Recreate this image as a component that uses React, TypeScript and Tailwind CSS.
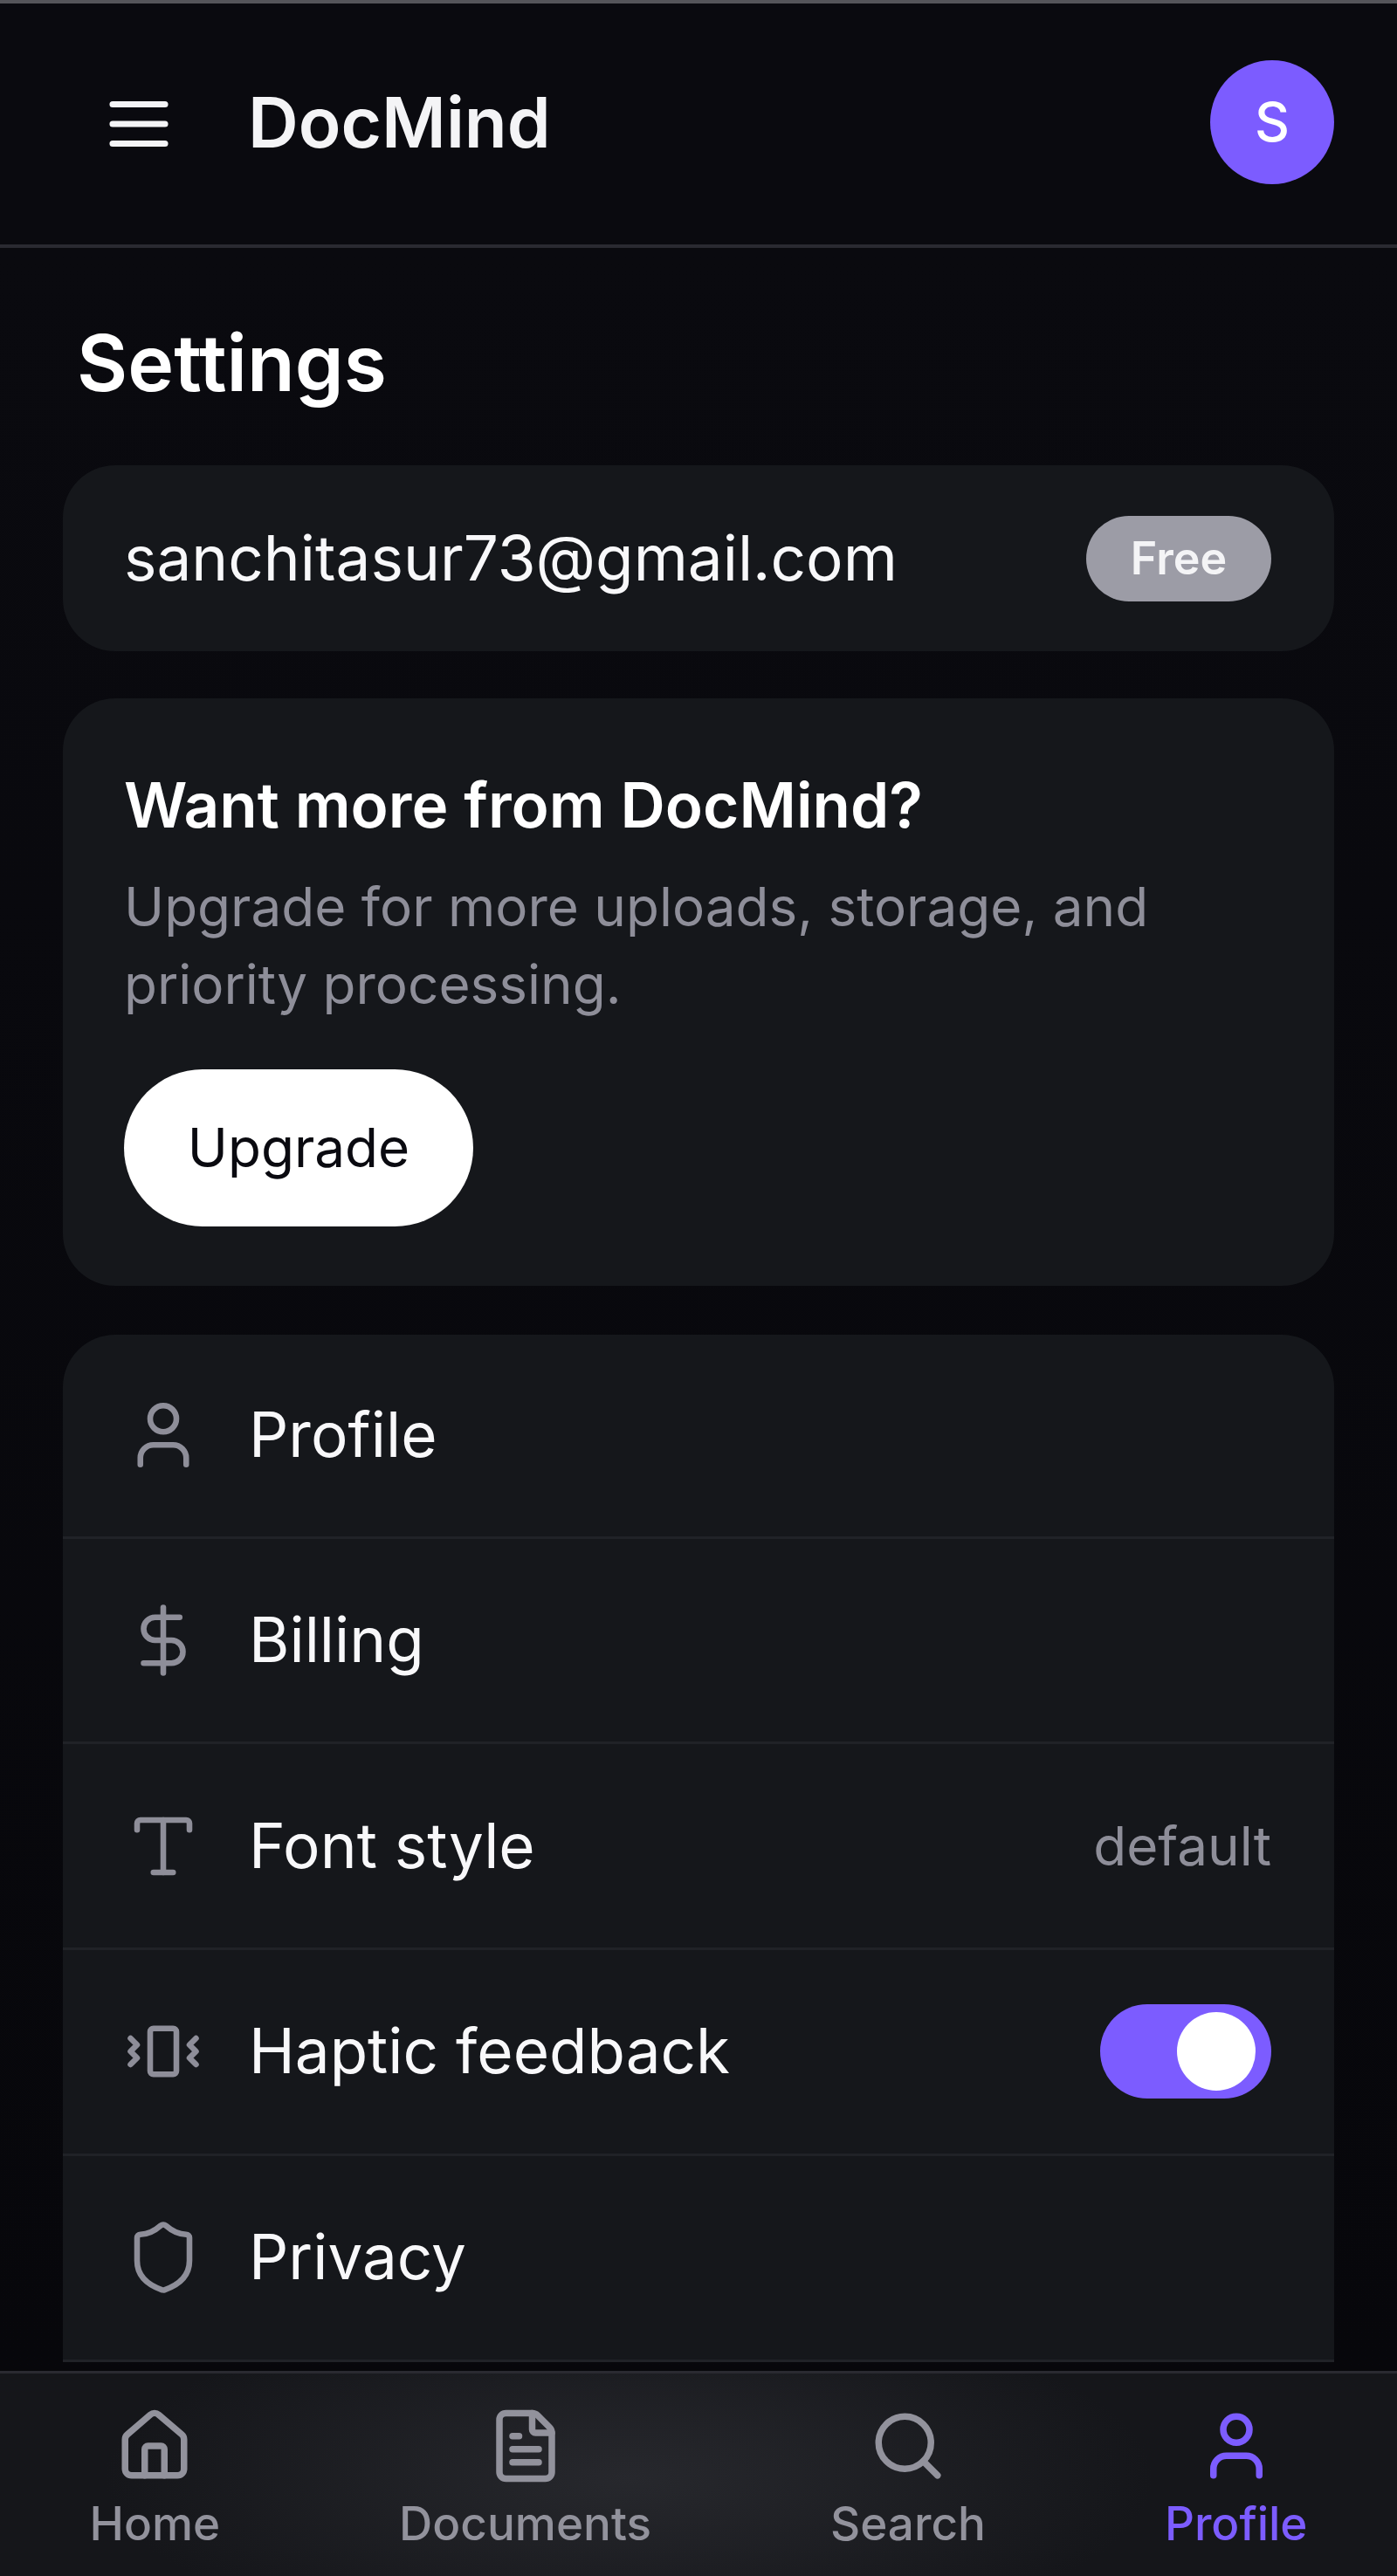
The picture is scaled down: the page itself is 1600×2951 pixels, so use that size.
import { DollarSign, FileText, House, Search, Shield, Type, User, Vibrate } from 'lucide-react';
import type { ReactNode } from 'react';

function Row({ icon, label, right }: { icon: ReactNode; label: string; right?: ReactNode }) {
  return (
    <div className="flex h-[235.75px] shrink-0 items-center border-b-[3px] border-[#202227] pl-[70px] pr-[72px] first:h-[233.5px]">
      <span className="flex w-[90px] shrink-0 justify-center text-[#8e8e99]">{icon}</span>
      <span className="-mt-[2px] ml-[53px] flex-1 text-[71px] leading-[100px] text-[#f8f8fa]">{label}</span>
      {right}
    </div>
  );
}

function NavItem({ icon, label, active }: { icon: ReactNode; label: string; active?: boolean }) {
  return (
    <div className={`flex flex-col items-center ${active ? 'text-[#7c5cff]' : 'text-[#92929c]'}`}>
      {icon}
      <span className="mt-[9px] text-[53px] leading-[70px] font-medium">{label}</span>
    </div>
  );
}

export default function App() {
  return (
    <div className="flex h-[2951px] w-[1600px] flex-col overflow-hidden bg-[#0a0a0f] font-['Inter',sans-serif]">
      <div className="h-[4px] shrink-0 bg-[#55555a]" />

      <header className="flex h-[280px] shrink-0 items-center justify-between border-b-[4px] border-[#2a2a31] pl-[114px] pr-[72px]">
        <div className="flex items-center">
          <svg width="90" height="90" viewBox="0 0 24 24" fill="none" stroke="#f4f4f6" strokeWidth="1.9" strokeLinecap="round">
            <path d="M4 6h16M4 12h16M4 18h16" />
          </svg>
          <span className="-mt-[5px] ml-[80px] text-[80px] leading-[100px] font-semibold text-[#f4f4f6]">DocMind</span>
        </div>
        <div className="-mt-[5px] flex h-[142px] w-[142px] items-center justify-center rounded-full bg-[#7c5cff] text-[62px] font-medium text-white">S</div>
      </header>

      <main className="min-h-0 flex-1 overflow-hidden bg-gradient-to-b from-[#0a0a0f] to-[#07070b] px-[72px]">
        <h1 className="pl-[16px] pt-[76px] text-[89.5px] leading-[112px] font-semibold text-white">Settings</h1>

        <section className="mt-[61px] flex h-[213px] items-center justify-between rounded-[60px] bg-[#15171b] pl-[70px] pr-[72px]">
          <span className="-mt-[2px] text-[71px] leading-[100px] text-[#f8f8fa]">sanchitasur73@gmail.com</span>
          <span className="flex h-[98px] w-[212px] items-center justify-center rounded-full bg-[#9c9ca6] text-[52px] font-semibold text-[#f4f4f6]">Free</span>
        </section>

        <section className="mt-[54px] rounded-[60px] bg-[#15171b] pb-[68px] pl-[70px] pr-[72px] pt-[72px]">
          <h2 className="text-[71px] leading-[100px] font-semibold text-white">Want more from DocMind?</h2>
          <p className="mt-[22px] text-[62px] leading-[89px] text-[#8e8e99]">
            Upgrade for more uploads, storage, and
            <br />
            priority processing.
          </p>
          <button className="mt-[53px] flex h-[180px] w-[400px] items-center justify-center rounded-full bg-white pb-[2px] text-[62px] font-normal text-[#0a0a10]">Upgrade</button>
        </section>

        <section className="mt-[56px] rounded-t-[60px] bg-[#15171b]">
          <Row icon={<User size={90} strokeWidth={1.75} />} label="Profile" />
          <Row icon={<DollarSign size={90} strokeWidth={1.75} />} label="Billing" />
          <Row icon={<Type size={90} strokeWidth={1.75} />} label="Font style" right={<span className="text-[62px] text-[#8e8e99]">default</span>} />
          <Row
            icon={<Vibrate size={90} strokeWidth={1.75} />}
            label="Haptic feedback"
            right={
              <span className="flex h-[108px] w-[196px] items-center justify-end rounded-full bg-[#7c5cff] pr-[18px]">
                <span className="h-[90px] w-[90px] rounded-full bg-white" />
              </span>
            }
          />
          <Row icon={<Shield size={90} strokeWidth={1.75} />} label="Privacy" />
        </section>
      </main>

      <nav className="flex h-[235px] shrink-0 items-start justify-around border-t-[3px] border-[#2a2a31] bg-[radial-gradient(ellipse_600px_200px_at_720px_120px,#27282d,#15161a)] pt-[38px]">
        <NavItem icon={<House size={90} strokeWidth={2} />} label="Home" />
        <NavItem icon={<FileText size={90} strokeWidth={2} />} label="Documents" />
        <NavItem icon={<Search size={90} strokeWidth={2} />} label="Search" />
        <NavItem icon={<User size={90} strokeWidth={2} />} label="Profile" active />
      </nav>
    </div>
  );
}
